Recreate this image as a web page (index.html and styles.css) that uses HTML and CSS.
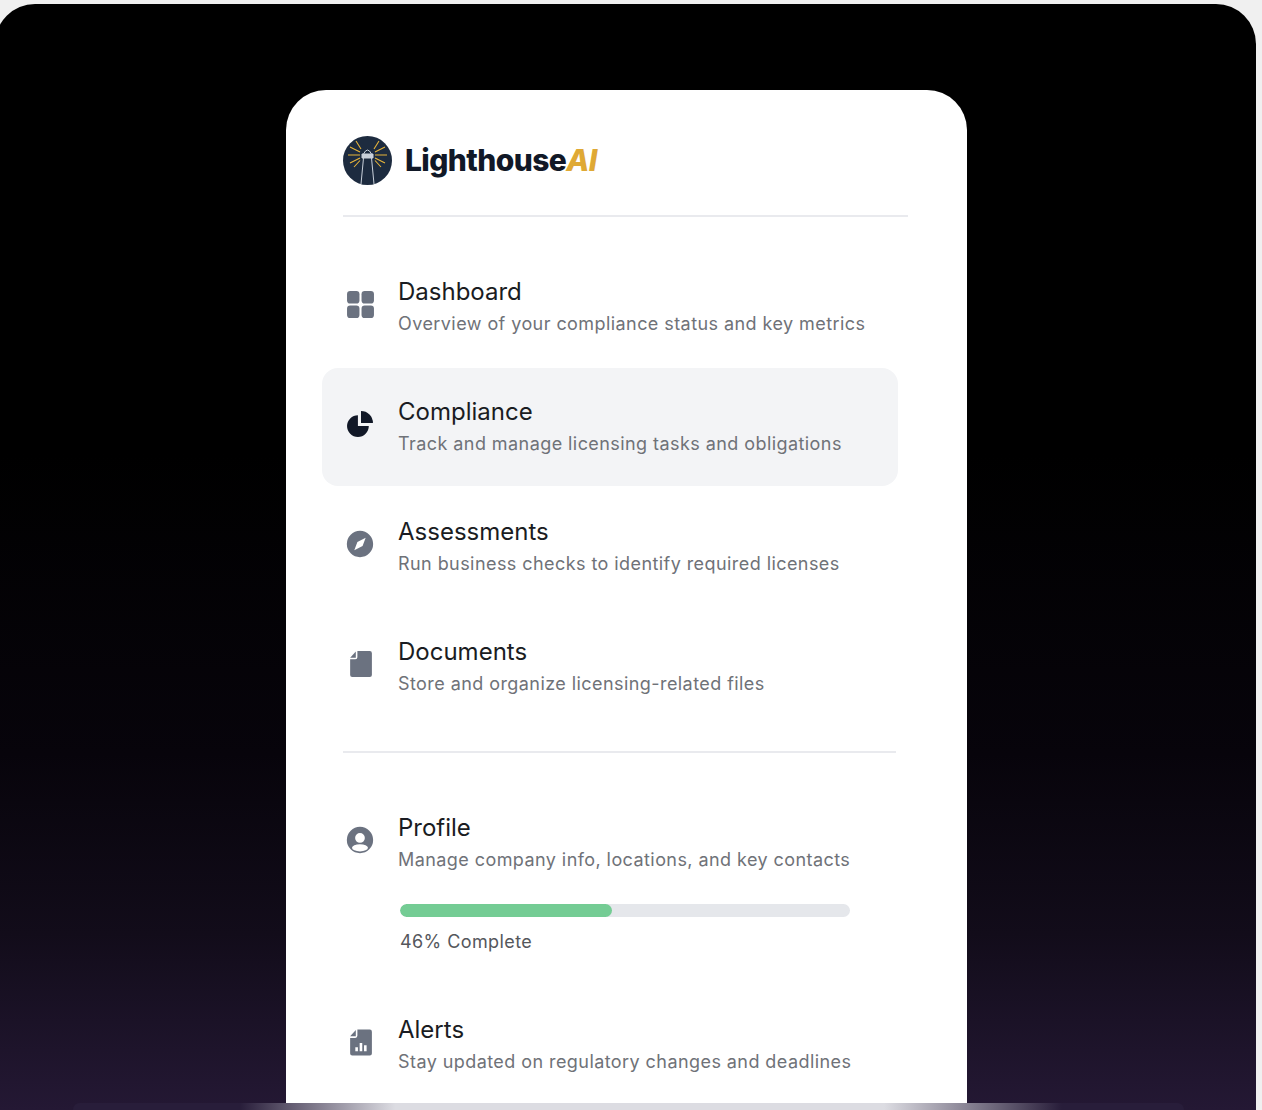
FILE: index.html
```html
<!DOCTYPE html>
<html lang="en">
<head>
    <meta charset="UTF-8">
    <meta name="viewport" content="width=device-width, initial-scale=1.0">
    <title>LighthouseAI menu</title>
    <link rel="stylesheet" href="styles.css">
</head>
<body>
    <div class="panel">
        <div class="card">
            <div class="brand">
                <svg class="brand-logo" viewBox="0 0 49 49">
                    <circle cx="24.5" cy="24.5" r="24.5" fill="#1d2b3f"/>
                    <g stroke="#e8b53a" stroke-width="1.1" fill="none">
                        <path d="M17 19 H5 M17 16 L7 11 M17 22 L7 27 M18 13 L13 5 M17 24.500 L11 31"/>
                        <path d="M32 19 H44 M32 16 L42 11 M32 22 L42 27 M31 13 L36 5 M32 24.500 L38 31"/>
                    </g>
                    <g stroke="#c9d0da" stroke-width="1" fill="none">
                        <path d="M20.500 18 Q24.500 10 28.500 18"/>
                        <path d="M19 18 H30 V22 H19 Z" fill="#c9d0da"/>
                        <path d="M20.500 22 L18 48 M28.500 22 L31 48"/>
                    </g>
                </svg>
                <div class="brand-name">Lighthouse<span class="brand-ai">AI</span></div>
            </div>

            <div class="menu">
                <div class="item">
                    <svg class="icon" viewBox="0 0 28 28">
                        <rect x="1" y="2" width="12" height="12" rx="3"/>
                        <rect x="15" y="2" width="12" height="12" rx="3"/>
                        <rect x="1" y="16" width="12" height="12" rx="3"/>
                        <rect x="15" y="16" width="12" height="12" rx="3"/>
                    </svg>
                    <div>
                        <div class="item-title">Dashboard</div>
                        <div class="item-text">Overview of your compliance status and key metrics</div>
                    </div>
                </div>
                <div class="item item-active">
                    <svg class="icon icon-dark" viewBox="0 0 28 28">
                        <path d="M11.500 6 A 10.500 10.500 0 1 0 22 16.500 H11.500 Z"/>
                        <path d="M14.500 2 A 11.500 11.500 0 0 1 26 13.500 H14.500 Z"/>
                    </svg>
                    <div>
                        <div class="item-title">Compliance</div>
                        <div class="item-text">Track and manage licensing tasks and obligations</div>
                    </div>
                </div>
                <div class="item">
                    <svg class="icon" viewBox="0 0 28 28">
                        <path fill-rule="evenodd" d="M13.500 1.800 A 12.700 12.700 0 1 1 13.500 27.200 A 12.700 12.700 0 1 1 13.500 1.800 Z M19 8.500 L11 12.500 L8 20.500 L16 16.500 Z"/>
                    </svg>
                    <div>
                        <div class="item-title">Assessments</div>
                        <div class="item-text">Run business checks to identify required licenses</div>
                    </div>
                </div>
                <div class="item">
                    <svg class="icon" viewBox="0 0 28 28">
                        <path d="M11 2 H23 A 2 2 0 0 1 25 4 V25 A 2 2 0 0 1 23 27 H6 A 2 2 0 0 1 4 25 V10 H9 A 2 2 0 0 0 11 8 Z"/>
                        <path d="M9.500 2.500 V8.500 H4 Z"/>
                    </svg>
                    <div>
                        <div class="item-title">Documents</div>
                        <div class="item-text">Store and organize licensing-related files</div>
                    </div>
                </div>
            </div>

            <div class="rule"></div>

            <div class="menu">
                <div class="item item-profile">
                    <svg class="icon" viewBox="0 0 28 28">
                        <path fill-rule="evenodd" d="M13.500 1.800 A 12.700 12.700 0 1 1 13.500 27.200 A 12.700 12.700 0 1 1 13.500 1.800 Z M13.500 7.800 A 4.700 4.700 0 1 0 13.500 17.200 A 4.700 4.700 0 1 0 13.500 7.800 Z M13.500 18.500 A 7.700 3.500 0 1 0 13.500 25.500 A 7.700 3.500 0 1 0 13.500 18.500 Z"/>
                    </svg>
                    <div>
                        <div class="item-title">Profile</div>
                        <div class="item-text">Manage company info, locations, and key contacts</div>
                        <div class="progress">
                            <div class="progress-fill" style="width: 47%"></div>
                        </div>
                        <div class="progress-label">46% Complete</div>
                    </div>
                </div>
                <div class="item">
                    <svg class="icon" viewBox="0 0 28 28">
                        <path fill-rule="evenodd" d="M11 2.500 H23 A 2 2 0 0 1 25 4.500 V25.500 A 2 2 0 0 1 23 27.500 H6 A 2 2 0 0 1 4 25.500 V10.500 H9 A 2 2 0 0 0 11 8.500 Z M9 19.500 V23.500 H11.500 V19.500 Z M13.200 15.500 V23.500 H15.700 V15.500 Z M17.400 17.500 V23.500 H19.900 V17.500 Z"/>
                        <path d="M9.500 3 V9 H4 Z"/>
                    </svg>
                    <div>
                        <div class="item-title">Alerts</div>
                        <div class="item-text">Stay updated on regulatory changes and deadlines</div>
                    </div>
                </div>
            </div>
        </div>
        <div class="strip"></div>
    </div>
</body>
</html>
```
FILE: styles.css
```css
* {
    padding: 0;
    margin: 0;
    box-sizing: border-box;
}

html, body {
    height: 1110px;
    overflow: hidden;
}

body {
    background-color: #f0f0f0;
    font-family: Inter, "Noto Sans", sans-serif;
}

.panel {
    width: 1261px;
    height: 1106px;
    margin: 4px 0 0 -5px;
    padding: 86px 0 0 291px;
    border-radius: 40px 40px 0 0;
    overflow: hidden;
    position: relative;
    background: linear-gradient(180deg, #000 0, #000 450px, #07040b 750px, #120c1a 930px, #241834 1106px);
}

.card {
    width: 681px;
    height: 1013px;
    padding: 46px 59px 0 57px;
    background-color: #fff;
    border-radius: 40px 40px 0 0;
    overflow: hidden;
}

.brand {
    display: flex;
    align-items: center;
    gap: 13px;
    padding-bottom: 30px;
    border-bottom: 2px solid #e9eaee;
}

.brand-logo {
    width: 49px;
    height: 49px;
}

.brand-name {
    padding-bottom: 2px;
    font-size: 30px;
    font-weight: 800;
    letter-spacing: -0.6px;
    color: #111827;
}

.brand-ai {
    font-style: italic;
    color: #dfa935;
}

.menu {
    margin: 31px 0 0 -21px;
    width: 576px;
}

.item {
    display: flex;
    gap: 23px;
    height: 118px;
    margin-bottom: 2px;
    padding: 29px 0 0 24px;
    border-radius: 16px;
}

.item-active {
    background-color: #f3f4f6;
}

.item-profile {
    height: 200px;
}

.icon {
    flex: none;
    width: 29px;
    height: 29px;
    margin-top: 12px;
    fill: #6b7280;
}

.icon-dark {
    fill: #111827;
}

.item-title {
    font-size: 24px;
    line-height: 30px;
    color: #1a1c22;
}

.item-text {
    margin-top: 3px;
    font-size: 18px;
    line-height: 28px;
    letter-spacing: 0.43px;
    color: #6f7278;
}

.progress {
    width: 450px;
    height: 13px;
    margin: 30px 0 0 2px;
    background-color: #e5e7eb;
    border-radius: 7px;
    overflow: hidden;
}

.progress-fill {
    height: 100%;
    background-color: #74cc94;
    border-radius: 7px;
}

.progress-label {
    margin: 11px 0 0 2px;
    font-size: 18px;
    line-height: 28px;
    letter-spacing: 0.41px;
    color: #55575c;
}

.rule {
    width: 553px;
    height: 2px;
    margin-top: 25px;
    background-color: #e9eaee;
}

.strip {
    position: absolute;
    left: 78px;
    bottom: 0;
    width: 1111px;
    height: 7px;
    background: linear-gradient(90deg, #281d3a 0, #281d3a 15%, #dcdce2 29%, #dcdce2 73%, #281d3a 89%, #281d3a 100%);
    border-radius: 10px 10px 0 0;
}
```
